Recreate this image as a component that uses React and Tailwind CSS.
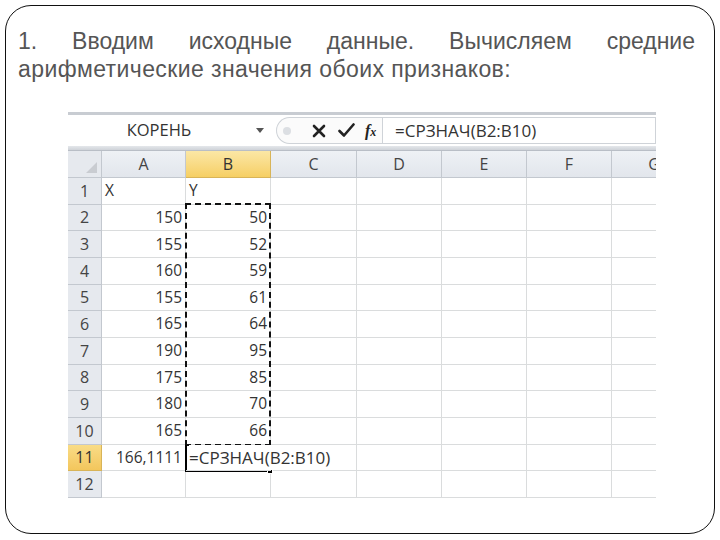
import React from "react";

const rows = [
  ["X", "Y"],
  ["150", "50"],
  ["155", "52"],
  ["160", "59"],
  ["155", "61"],
  ["165", "64"],
  ["190", "95"],
  ["175", "85"],
  ["180", "70"],
  ["165", "66"],
  ["166,1111", "=СРЗНАЧ(B2:B10)"],
  ["", ""],
];
const letters = ["A", "B", "C", "D", "E", "F", "G"];

function Sheet() {
  return (
    <div className="w-[588px] overflow-hidden" style={{ fontFamily: '"Open Sans", "Liberation Sans", sans-serif' }}>
      {/* formula bar */}
      <div className="h-[3px] bg-[#c8ccd2]" />
      <div className="h-[31px] bg-white flex items-center text-[16.5px] text-[#333]">
        <div className="w-[182px] flex justify-center">КОРЕНЬ</div>
        <div className="w-[20px] flex justify-center">
          <svg width="8" height="5" viewBox="0 0 8 5"><path d="M0 0h8L4 5z" fill="#555" /></svg>
        </div>
        <div className="ml-[6px] h-[27px] w-[106px] flex items-center border-l border-y border-[#cfd3d8] rounded-l-[14px] bg-[#fbfbfb]">
          <div className="ml-[6px] w-[8px] h-[8px] rounded-full bg-[#dcdfe3]" />
          <svg className="ml-[21px]" width="14" height="14" viewBox="0 0 14 14"><path d="M2 2L12 12M12 2L2 12" stroke="#222" strokeWidth="2.6" strokeLinecap="round" /></svg>
          <svg className="ml-[12px]" width="17" height="15" viewBox="0 0 17 15"><path d="M1.5 8L6 12.5L15.5 1.5" stroke="#222" strokeWidth="2.6" fill="none" strokeLinecap="round" strokeLinejoin="round" /></svg>
          <span className="ml-[10px] italic font-bold text-[16px] text-[#222]" style={{ fontFamily: '"Liberation Serif", serif' }}>f<span className="text-[12px]">x</span></span>
        </div>
        <div className="h-[27px] flex-1 border border-[#cfd3d8] flex items-center pl-[12px] text-[17px] text-[#333]">=СРЗНАЧ(B2:B10)</div>
      </div>
      <div className="h-[5px] bg-gradient-to-b from-[#e4e7eb] to-[#cfd3d9] border-b border-[#b9bec6]" />
      {/* grid */}
      <div className="relative">
        <div className="grid grid-cols-[34px_84px_85px_86px_85px_85px_85px_85px] grid-rows-[27px_repeat(12,26.67px)] text-[15.5px] text-[#333]">
          <div className="bg-[#e6e9ee] border-r border-b border-[#c3c8cf] relative">
            <svg className="absolute right-[4px] bottom-[4px]" width="11" height="11" viewBox="0 0 11 11"><path d="M11 0V11H0z" fill="#c9ccd1" /></svg>
          </div>
          {letters.map((l) => (
            <div
              key={l}
              className={
                l === "B"
                  ? "bg-gradient-to-b from-[#fbe7a5] to-[#f6cf63] border-r border-b border-[#d8b458] flex items-center justify-center text-[16px] text-[#333]"
                  : "bg-gradient-to-b from-[#eef1f5] to-[#e2e6ec] border-r border-b border-[#c3c8cf] flex items-center justify-center text-[16px] text-[#444]"
              }
            >
              {l}
            </div>
          ))}
          {rows.map((r, i) => (
            <React.Fragment key={i}>
              <div
                className={
                  i === 10
                    ? "bg-gradient-to-b from-[#f9dc86] to-[#f3c65c] border-r border-b border-[#d8b458] flex items-center justify-center text-[16px] text-[#333]"
                    : "bg-[#e6e9ee] border-r border-b border-[#c3c8cf] flex items-center justify-center text-[16px] text-[#444]"
                }
              >
                {i + 1}
              </div>
              <div className={"border-r border-b border-[#dadcdd] flex items-center px-[3px] " + (i === 0 ? "justify-start" : "justify-end")}>
                {r[0]}
              </div>
              {i === 10 ? (
                <div className="border-b border-[#dadcdd] flex items-center pl-[3px] whitespace-nowrap relative z-10 overflow-visible text-[17px]">
                  <span className="bg-white pr-[2px]">{r[1]}</span>
                </div>
              ) : (
                <div className={"border-r border-b border-[#dadcdd] flex items-center px-[3px] " + (i === 0 ? "justify-start" : "justify-end")}>
                  {r[1]}
                </div>
              )}
              {[0, 1, 2, 3, 4].map((k) => (
                <div key={k} className="border-r border-b border-[#dadcdd]" />
              ))}
            </React.Fragment>
          ))}
        </div>
        {/* copy marquee B2:B10 */}
        <div className="absolute left-[117px] top-[52px] w-[86px] h-[243px] border-[2.5px] border-dashed border-[#111] pointer-events-none" />
        {/* active cell B11 */}
        <div className="absolute left-[117px] top-[294px] w-[2px] h-[27px] bg-black" />
        <div className="absolute left-[117px] top-[319px] w-[84px] h-[2px] bg-black" />
        <div className="absolute left-[199px] top-[317px] w-[6px] h-[6px] bg-black border border-white" />
      </div>
    </div>
  );
}

export default function App() {
  return (
    <div className="w-[720px] h-[540px] bg-white pt-[5px] px-[5px]">
      <div className="h-[529px] border-[1.5px] border-[#111] rounded-[26px] pt-[21px]">
        <div
          className="pl-[12px] pr-[19px] text-[23px] leading-[28px] text-[#555]"
          style={{ fontFamily: '"Liberation Sans", Arial, sans-serif' }}
        >
          <div className="text-justify [text-align-last:justify]">1. Вводим исходные данные. Вычисляем средние</div>
          <div className="tracking-[0.4px]">арифметические значения обоих признаков:</div>
        </div>
        <div className="mt-[29px] ml-[62px]">
          <Sheet />
        </div>
      </div>
    </div>
  );
}
